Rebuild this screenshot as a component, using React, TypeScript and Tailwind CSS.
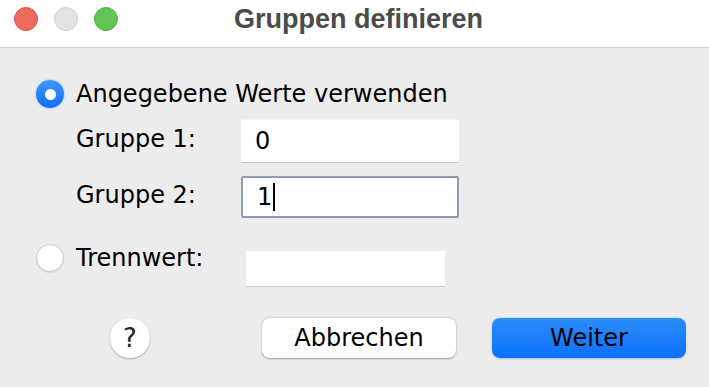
import { useState } from 'react'

const Radio = ({ checked }: { checked: boolean }) =>
  checked ? (
    <span className="flex h-[28px] w-[28px] shrink-0 items-center justify-center rounded-full bg-gradient-to-b from-[#3d95fb] to-[#0a6ff7] shadow-[0_0_2px_rgba(0,90,220,0.5)]">
      <span className="h-[11px] w-[11px] rounded-full bg-white" />
    </span>
  ) : (
    <span className="h-[28px] w-[28px] shrink-0 rounded-full border border-[#c9c9c9] bg-white shadow-[0_1px_1px_rgba(0,0,0,0.08)]" />
  )

export default function App() {
  const [g1, setG1] = useState('0')
  const [g2, setG2] = useState('1')

  return (
    <div className="flex h-[387px] w-[709px] flex-col overflow-hidden bg-[#ececec] font-['DejaVu_Sans',sans-serif] text-black">
      <header className="relative flex h-[48px] shrink-0 items-center justify-center border-b border-[#d3d3d3] bg-white">
        <div className="absolute left-[14px] top-[7px] flex gap-[16px]">
          <span className="h-[24px] w-[24px] rounded-full border border-[#e0564e] bg-[#ee6a5f]" />
          <span className="h-[24px] w-[24px] rounded-full border border-[#cfcfcf] bg-[#e3e3e3]" />
          <span className="h-[24px] w-[24px] rounded-full border border-[#52b348] bg-[#61c454]" />
        </div>
        <h1 className="-mt-[9px] ml-[8px] font-['Liberation_Sans',sans-serif] text-[27px] font-bold leading-[30px] text-[#4b4b4b]">
          Gruppen definieren
        </h1>
      </header>

      <main className="flex flex-1 flex-col pl-[36px] text-[24px] leading-[28px]">
        <label className="mt-[32px] flex items-center gap-[12px]">
          <Radio checked />
          <span>Angegebene Werte verwenden</span>
        </label>

        <div className="mt-[11px] flex flex-col gap-[13px] pl-[40px]">
          <div className="flex items-center">
            <span className="w-[165px] -translate-y-[2px]">Gruppe 1:</span>
            <input
              value={g1}
              onChange={(e) => setG1(e.target.value)}
              className="h-[44px] w-[218px] border-t border-b border-t-[#f4f4f4] border-b-[#c4c4c4] bg-white px-[14px] text-[24px] outline-none"
            />
          </div>
          <div className="flex items-center">
            <span className="w-[165px] -translate-y-[2px]">Gruppe 2:</span>
            <div className="flex h-[42px] w-[218px] items-center rounded-[2px] border-2 border-[#8d9cb3] bg-white px-[14px] text-[24px]">
              <span>{g2}</span>
              <span className="ml-[1px] h-[28px] w-[2px] bg-black" />
            </div>
          </div>
        </div>

        <div className="mt-[11px] flex items-center">
          <label className="flex w-[210px] items-center gap-[12px]">
            <Radio checked={false} />
            <span>Trennwert:</span>
          </label>
          <input className="mt-[22px] h-[36px] w-[199px] border-b border-[#cdcdcd] bg-white outline-none" />
        </div>

        <div className="mt-[31px] flex items-center">
          <button
            onClick={() => setG2(g2)}
            className="ml-[74px] flex h-[40px] w-[40px] items-center justify-center rounded-full bg-white text-[26px] font-medium text-[#222] shadow-[0_1px_2px_rgba(0,0,0,0.3)]"
          >
            ?
          </button>
          <button className="ml-[112px] h-[40px] w-[194px] rounded-[8px] bg-white text-[24px] shadow-[0_0.5px_2px_rgba(0,0,0,0.35)]">
            Abbrechen
          </button>
          <button className="ml-[36px] h-[40px] w-[194px] rounded-[8px] bg-gradient-to-b from-[#2a8dfb] to-[#0a70f9] text-[24px] shadow-[0_0.5px_2px_rgba(0,80,200,0.3)]">
            Weiter
          </button>
        </div>
      </main>
    </div>
  )
}
